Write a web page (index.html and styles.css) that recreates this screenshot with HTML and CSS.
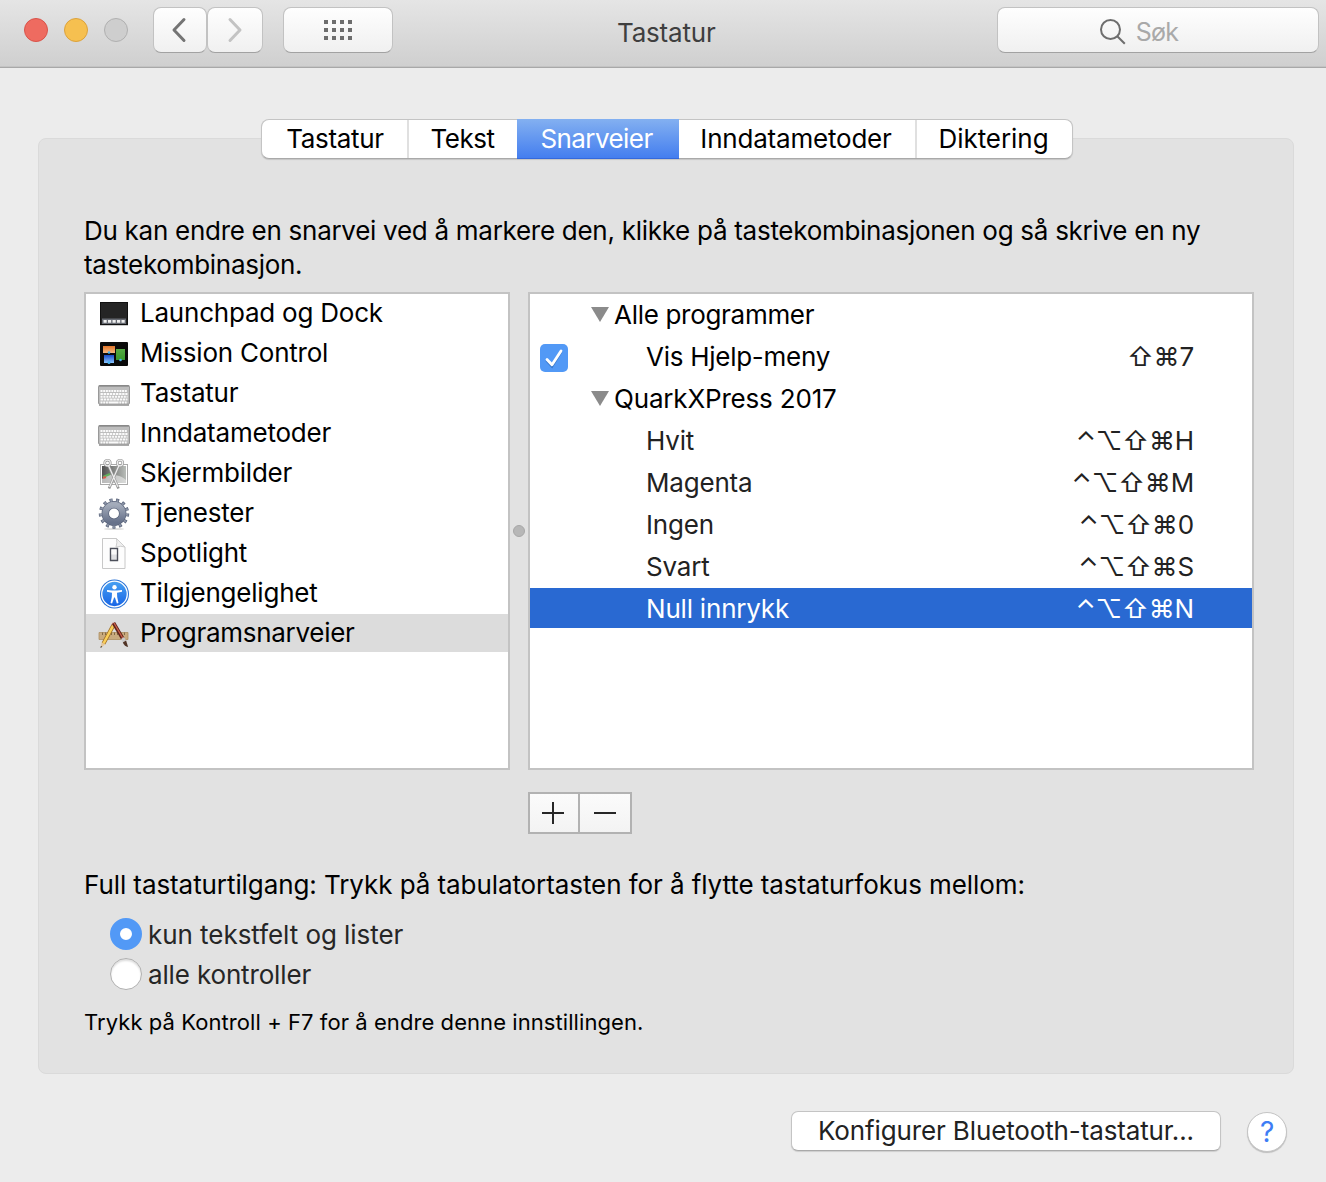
FILE: index.html
```html
<!DOCTYPE html>
<html lang="nb">
<head>
<meta charset="utf-8">
<title>Tastatur</title>
<link rel="stylesheet" href="styles.css">
</head>
<body>
<header class="titlebar">
  <div class="lights"><i class="light red"></i><i class="light yellow"></i><i class="light off"></i></div>
  <div class="nav">
    <button class="tool back"><svg width="16" height="26" viewBox="0 0 16 26"><path d="M13 2.500 3 13l10 10.500" fill="none" stroke="#747474" stroke-width="3" stroke-linecap="round" stroke-linejoin="round"/></svg></button>
    <button class="tool forward"><svg width="16" height="26" viewBox="0 0 16 26"><path d="M3 2.500 13 13 3 23.500" fill="none" stroke="#c3c3c3" stroke-width="3" stroke-linecap="round" stroke-linejoin="round"/></svg></button>
  </div>
  <button class="tool grid"><svg width="28" height="20" viewBox="0 0 28 20" fill="#6d6d6d"><path d="M0 0h4v4H0zM8 0h4v4H8zM16 0h4v4h-4zM24 0h4v4h-4zM0 8h4v4H0zM8 8h4v4H8zM16 8h4v4h-4zM24 8h4v4h-4zM0 16h4v4H0zM8 16h4v4H8zM16 16h4v4h-4zM24 16h4v4h-4z"/></svg></button>
  <h1>Tastatur</h1>
  <div class="search"><svg width="26" height="26" viewBox="0 0 26 26" fill="none" stroke="#6e6e6e" stroke-width="2"><circle cx="10.500" cy="10.500" r="9.500"/><path d="m17.300 17.300 7.500 7.500"/></svg><span>Søk</span></div>
</header>

<main>
  <nav class="tabs">
    <span class="tab t1">Tastatur</span><span class="tab t2">Tekst</span><span class="tab t3 active">Snarveier</span><span class="tab t4">Inndatametoder</span><span class="tab t5">Diktering</span>
  </nav>
  <section class="panel">
    <p class="intro">Du kan endre en snarvei ved å markere den, klikke på tastekombinasjonen og så skrive en ny<br>tastekombinasjon.</p>
    <div class="lists">
      <ul class="categories">
        <li><svg width="32" height="32" viewBox="0 0 32 32"><rect x="2" y="26" width="28" height="2" fill="#ccc"/><rect x="2.500" y="4.500" width="27" height="22" fill="#252525" stroke="#111"/><path d="M4 20.500h24V26H4z" fill="#666a72"/><path d="M5.500 23.300h21.500" stroke="#eee" stroke-width="2.800" stroke-dasharray="3.200 1.300"/></svg>Launchpad og Dock</li>
        <li><svg width="32" height="32" viewBox="0 0 32 32"><defs><linearGradient id="or" x2="0" y2="1"><stop stop-color="#e2752a"/><stop offset="1" stop-color="#f5b981"/></linearGradient><linearGradient id="bl" x2="0" y2="1"><stop stop-color="#154bc8"/><stop offset="1" stop-color="#8cc6ff"/></linearGradient><linearGradient id="gr" x2="0" y2="1"><stop stop-color="#55ab43"/><stop offset="1" stop-color="#37972c"/></linearGradient></defs><rect x="2" y="4" width="28" height="24" rx="1" fill="#0a0a0a"/><path d="M5 8h12v7H5z" fill="url(#or)"/><path d="M6 17h10v8H6z" fill="url(#bl)"/><path d="M18 11h9v11h-9z" fill="url(#gr)"/><g fill="#47b3ef"><circle cx="11" cy="14.500" r="1.300"/><circle cx="11" cy="24.500" r="1.500"/><circle cx="22.500" cy="22" r="1.300"/></g></svg>Mission Control</li>
        <li><svg width="32" height="32" viewBox="0 0 32 32"><use href="#kb"/></svg>Tastatur</li>
        <li><svg width="32" height="32" viewBox="0 0 32 32"><g id="kb"><path d="M1 27h30" stroke="#aaa" stroke-width="2"/><rect x=".5" y="7.500" width="31" height="18.500" rx="1" fill="#bdbdbd" stroke="#999"/><path d="M1 8h30" stroke="#777"/><g stroke="#fafafa" stroke-width="2"><path d="M2.500 13h27" stroke-dasharray="2 .7"/><path d="M2.500 15.900h27" stroke-dasharray="2.400 .7"/><path d="M2.500 18.800h27" stroke-dasharray="2.100 .8"/><path d="M2.500 21.600h27" stroke-dasharray="2.500 .7"/><path d="M2.500 24.400h27" stroke-dasharray="2 .7 2 .7 2 .7 10 .7 2 .7 2 .7 2 .7"/></g></g></svg>Inndatametoder</li>
        <li><svg width="32" height="32" viewBox="0 0 32 32"><defs><linearGradient id="ph"><stop stop-color="#4f4f4f"/><stop offset="1" stop-color="#b9bdb9"/></linearGradient></defs><rect x="2.500" y="6.500" width="27" height="20" fill="#fff" stroke="#aaa"/><rect x="4" y="8" width="24" height="17" fill="url(#ph)"/><path d="M4 21q6-6 13-4 7 1 11 5v3H4z" fill="#e5e5e5" opacity=".7"/><path d="m5 19 7-3" stroke="#62b05c" stroke-width="2"/><path d="m5 20 3-1" stroke="#d65e50" stroke-width="2"/><g fill="none" stroke="#969696" stroke-width="2.600"><circle cx="9.500" cy="5" r="2.800"/><circle cx="22" cy="5" r="2.800"/><path d="m10.500 7.500 10 23M21 7.500l-10 23"/></g><g fill="none" stroke="#eee" stroke-width="1.200"><circle cx="9.500" cy="5" r="2.800"/><circle cx="22" cy="5" r="2.800"/><path d="m10.500 7.500 9.500 21.500M21 7.500 11.500 29"/></g></svg>Skjermbilder</li>
        <li><svg width="32" height="32" viewBox="0 0 32 32"><defs><linearGradient id="ge" x2="0" y2="1"><stop stop-color="#a3abba"/><stop offset="1" stop-color="#66718a"/></linearGradient></defs><ellipse cx="16" cy="31" rx="10" ry="1" fill="#ddd"/><circle cx="16" cy="15.500" r="13.300" fill="none" stroke="#586279" stroke-width="3.800" stroke-dasharray="3 3.428"/><circle cx="16" cy="15.500" r="8.700" fill="none" stroke="#586279" stroke-width="7.400"/><circle cx="16" cy="15.500" r="8.700" fill="none" stroke="url(#ge)" stroke-width="6"/><circle cx="16" cy="15.500" r="13.300" fill="none" stroke="#8e97a9" stroke-width="2.500" stroke-dasharray="1.700 4.728" stroke-dashoffset="-.65"/></svg>Tjenester</li>
        <li><svg width="32" height="32" viewBox="0 0 32 32"><path d="M4.500.5h14l8.500 8.500v21.500H4.500z" fill="#fdfdfd" stroke="#c8c8c8"/><path d="M18.500.5q1 4-.5 8.500 5-1.500 9 0z" fill="#f0f0f0" stroke="#cdcdcd"/><path d="M12.500 10.500h7v12h-7z" fill="#dfe0e3" stroke="#4c4f5a" stroke-width="1.400"/><path d="M13.500 11.500h5v5h-5z" fill="#f9f9f9"/></svg>Spotlight</li>
        <li><svg width="32" height="32" viewBox="0 0 32 32"><defs><linearGradient id="ac" x2="0" y2="1"><stop stop-color="#49a1f2"/><stop offset="1" stop-color="#1764e5"/></linearGradient></defs><circle cx="16.500" cy="16" r="14.500" fill="#2872d5"/><circle cx="16.500" cy="16" r="12.800" fill="url(#ac)" stroke="#fff" stroke-width="1.300"/><circle cx="16.500" cy="9.300" r="2.200" fill="#fff"/><path d="m9 12 5 .5h5l5-.5v1.700l-5 1 .2 4.300 1.300 6-1.600.4-2-6h-.8l-2 6-1.600-.4 1.300-6 .2-4.300-5-1z" fill="#fff"/></svg>Tilgjengelighet</li>
        <li class="selected"><svg width="32" height="32" viewBox="0 0 32 32"><path d="M1 14.500h29v7H1z" fill="#c9ab7f" stroke="#ad8f62" stroke-width=".8"/><path d="M4.500 14.500v2.500m3-2.500v2.500m3-2.500v2.500m3-2.500v2.500m3-2.500v2.500m3-2.500v2.500m3-2.500v2.500m4-2.500v2.500" stroke="#7b6240" stroke-width=".9"/><path d="M15.500 7 5.500 25.500" stroke="#a06f24" stroke-width="4"/><path d="M15.500 7 5.500 25.500" stroke="#f9cf5a" stroke-width="2.600"/><path d="m16.500 5.200-1.300 2.400" stroke="#e59b91" stroke-width="4"/><path d="m3.700 24.500 3.500 2-4.700 3.500z" fill="#e4c69b"/><path d="m2.500 30 .4-2 1.400.8z" fill="#222"/><path d="m15.500 5 9.500 16" stroke="#5e241b" stroke-width="3.600"/><path d="m16 5 9 15.500" stroke="#cd604b" stroke-width="1.300"/><path d="m24.500 20 2 3.500" stroke="#c9c9c9" stroke-width="3.600"/><path d="m24.800 24.500 3.300-2 2 6.500q-3.500-.5-5.300-4.500z" fill="#503325"/></svg>Programsnarveier</li>
      </ul>
      <i class="splitter"></i>
      <ul class="shortcuts">
        <li class="group"><i class="tri"></i><span>Alle programmer</span></li>
        <li class="first"><svg class="check" width="28" height="28" viewBox="0 0 28 28"><rect width="28" height="28" rx="5" fill="#5299f6"/><path d="m7 16 5 5.500L21 7" transform="translate(0 .8)" fill="none" stroke="#3878cc" stroke-width="2.800" stroke-linecap="round"/><path d="m7 15.500 5 5.300L21 7" fill="none" stroke="#fff" stroke-width="2.800" stroke-linecap="round" stroke-linejoin="round"/></svg><span>Vis Hjelp-meny</span><kbd>⇧⌘7</kbd></li>
        <li class="group quark"><i class="tri"></i><span>QuarkXPress 2017</span></li>
        <li><span>Hvit</span><kbd><b>⌃</b>⌥⇧⌘H</kbd></li>
        <li><span>Magenta</span><kbd><b>⌃</b>⌥⇧⌘M</kbd></li>
        <li><span>Ingen</span><kbd><b>⌃</b>⌥⇧⌘0</kbd></li>
        <li><span>Svart</span><kbd><b>⌃</b>⌥⇧⌘S</kbd></li>
        <li class="selected"><span>Null innrykk</span><kbd><b>⌃</b>⌥⇧⌘N</kbd></li>
      </ul>
    </div>
    <div class="addremove">
      <button><svg width="22" height="22" viewBox="0 0 22 22"><path d="M0 11h22M11 0v22" stroke="#262626" stroke-width="2"/></svg></button>
      <button><svg width="22" height="22" viewBox="0 0 22 22"><path d="M0 11h22" stroke="#262626" stroke-width="2"/></svg></button>
    </div>
    <p class="access">Full tastaturtilgang: Trykk på tabulatortasten for å flytte tastaturfokus mellom:</p>
    <div class="radios">
      <label><i class="radio on"></i><span>kun tekstfelt og lister</span></label>
      <label class="all"><i class="radio"></i><span>alle kontroller</span></label>
    </div>
    <p class="hint">Trykk på Kontroll + F7 for å endre denne innstillingen.</p>
  </section>
  <footer>
    <button class="bluetooth">Konfigurer Bluetooth-tastatur...</button>
    <button class="help">?</button>
  </footer>
</main>
</body>
</html>
```

FILE: styles.css
```css
* { box-sizing: border-box; }
body {
  margin: 0;
  height: 1182px;
  overflow: hidden;
  background: #ececec;
  color: #000;
  font: 26px/34px Inter, "Liberation Sans", sans-serif;
  letter-spacing: -0.2px;
}
h1, p, ul { margin: 0; padding: 0; }
ul { list-style: none; }
button { font: inherit; letter-spacing: inherit; padding: 0; border: 0; }
i { display: block; }
svg { display: block; flex: none; }

.titlebar {
  display: grid;
  grid-template-columns: 153px 130px 335px 379px 322px;
  height: 68px;
  padding-top: 7px;
  background: linear-gradient(#e5e5e5, #cfcfcf);
  border-bottom: 1px solid #a8a8a8;
  box-shadow: inset 0 -1px #c3c3c3;
}
.lights { display: flex; gap: 16px; padding: 11px 0 0 24px; }
.light { width: 24px; height: 24px; border-radius: 50%; border: 1px solid; }
.red { background: #ee6b60; border-color: #d9534a; }
.yellow { background: #f6c050; border-color: #dca23c; }
.off { background: #cecece; border-color: #b0b0b0; }
.nav { display: flex; }
.tool, .search {
  display: flex;
  align-items: center;
  justify-content: center;
  height: 46px;
  border: 1px solid #c2c2c2;
  border-bottom-color: #a2a2a2;
  border-radius: 8px;
  background: linear-gradient(#fefefe, #f0f0f0);
}
.back { width: 54px; padding-right: 2px; }
.forward { width: 56px; padding-right: 1px; }
.grid { width: 110px; }
h1 { font-size: 26px; font-weight: 400; line-height: 34px; padding-top: 9px; color: #3f3f3f; letter-spacing: -0.2px; }
.titlebar h1 { grid-column: 4; margin-left: -1px; }
.titlebar .grid { grid-column: 3; }
.search { width: 322px; padding-right: 38px; }
.search span { margin: 3px 0 0 10px; font-size: 25px; letter-spacing: -0.7px; color: #a9a9a9; }
.search svg { margin-top: 3px; }

main { padding: 51px 32px 0 38px; }
.tabs {
  position: relative;
  z-index: 1;
  display: flex;
  width: 812px;
  height: 40px;
  margin: 0 0 -21px 223px;
  background: #fff;
  border: 1px solid #c4c4c4;
  border-bottom-color: #a9a9a9;
  border-radius: 8px;
  box-shadow: 0 1px 1px #0002;
}
.tab { text-align: center; line-height: 38px; border-right: 2px solid #e0e0e0; }
.t1 { width: 147px; letter-spacing: -0.33px; padding-left: 1px; }
.t2 { width: 108px; letter-spacing: -0.45px; border: 0; padding-right: 1px; }
.t3 { width: 162px; letter-spacing: -0.57px; padding-right: 3px; }
.t4 { width: 238px; padding-right: 2px; }
.t5 { width: 155px; letter-spacing: -0.05px; border: 0; padding-right: 2px; }
.tab.active {
  margin: -1px 0;
  line-height: 40px;
  color: #fff;
  border: 0;
  border-bottom: 1px solid #3469dc;
  background: linear-gradient(#83b0f1, #447eef);
}

.panel {
  width: 1256px;
  height: 936px;
  padding: 75px 40px 0 45px;
  background: #e2e2e2;
  border: 1px solid #dadada;
  border-radius: 8px;
}
.intro { letter-spacing: -0.28px; white-space: nowrap; }
.lists { display: flex; width: 1170px; height: 478px; margin-top: 10px; }
.categories, .shortcuts { background: #fff; border: 2px solid #c3c3c3; }
.categories { width: 426px; }
.categories li {
  display: flex;
  align-items: center;
  height: 38px;
  margin-bottom: 2px;
  padding-left: 12px;
  gap: 10px;
  letter-spacing: -0.22px;
}
.categories li svg { margin-top: 2px; }
.categories .selected { background: #dcdcdc; letter-spacing: -0.28px; }
.splitter {
  align-self: center;
  width: 12px;
  height: 12px;
  margin: 0 3px;
  border: 1px solid #a8a8a8;
  border-radius: 50%;
  background: #b7b7b7;
}
.shortcuts { width: 726px; }
.shortcuts li {
  display: flex;
  align-items: center;
  height: 40px;
  margin-bottom: 2px;
  padding: 2px 58px 0 116px;
  color: #222;
}
.shortcuts .group { padding-left: 61px; color: #000; letter-spacing: -0.3px; }
.shortcuts .quark { letter-spacing: -0.18px; }
.tri { border: 9px solid transparent; border-top: 15px solid #8b8b8b; border-bottom: 0; margin: -2px 5px 0 0; }
.shortcuts .first { padding-left: 10px; letter-spacing: -0.27px; }
.first span { color: #000; }
.first .check { margin: 2px 78px 0 0; }
kbd { margin-left: auto; font: inherit; letter-spacing: -0.15px; }
kbd b { font-weight: 400; }
.shortcuts .selected { background: #2969d2; color: #fff; }

.addremove {
  display: flex;
  gap: 2px;
  width: 104px;
  height: 42px;
  margin: 22px 0 0 444px;
  background: #b2b2b2;
  border: 2px solid #b2b2b2;
}
.addremove button { display: grid; place-items: center; width: 48px; padding-right: 2px; background: linear-gradient(#fbfbfb, #f3f3f3); }
.addremove button + button { width: 50px; padding: 0; }
.access { margin-top: 34px; letter-spacing: -0.08px; }
.radios { display: grid; gap: 8px; margin: 16px 0 0 26px; }
.radios label { display: flex; align-items: center; height: 32px; gap: 6px; color: #262626; letter-spacing: -0.05px; }
.radios span { padding-top: 2px; }
.radios .all { letter-spacing: -0.15px; }
.radio { width: 32px; height: 32px; border-radius: 50%; background: #fff; border: 1px solid #b0b0b0; box-shadow: inset 0 2px 2px #0002; }
.radio.on { border: 10px solid #5299f6; box-shadow: none; }
.hint { margin-top: 17px; font-size: 22px; line-height: 30px; letter-spacing: 0.07px; }

footer { display: flex; justify-content: flex-end; align-items: center; gap: 26px; padding: 36px 7px 0 0; }
.bluetooth {
  width: 430px;
  height: 40px;
  background: #fff;
  color: #222;
  border: 1px solid #c4c4c4;
  border-bottom-color: #a9a9a9;
  border-radius: 7px;
  letter-spacing: -0.13px;
  box-shadow: 0 1px 1px #0002;
}
.help {
  width: 40px;
  height: 40px;
  margin-top: 2px;
  border: 1px solid #c4c4c4;
  border-radius: 50%;
  background: #fff;
  color: #3e7df5;
  font-size: 28px;
  box-shadow: 0 1px 1px #0003;
}
```
